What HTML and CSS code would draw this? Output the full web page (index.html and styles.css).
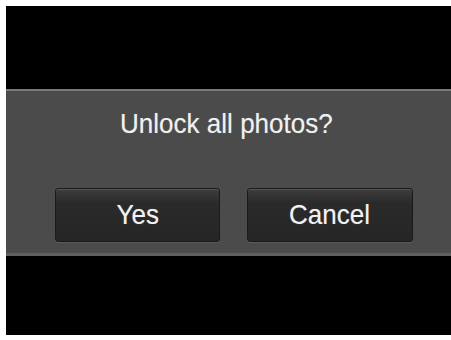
FILE: index.html
```html
<!DOCTYPE html>
<html>
<head>
<meta charset="utf-8">
<link rel="stylesheet" href="styles.css">
</head>
<body>
<div class="screen">
  <div class="dialog">
    <div class="title"><span class="label">Unlock all photos?</span></div>
    <div class="buttons">
      <div class="btn"><span class="label">Yes</span></div>
      <div class="btn"><span class="label">Cancel</span></div>
    </div>
  </div>
</div>
</body>
</html>
```

FILE: styles.css
```css
html, body {
  margin: 0;
  padding: 0;
  background: #ffffff;
}
body {
  padding: 6px 0 5px 6px;
  font-family: "Liberation Sans", Arial, sans-serif;
}
.screen {
  background: #000000;
  height: 329px;
  padding-top: 83px;
  box-sizing: border-box;
}
.dialog {
  height: 167px;
  box-sizing: border-box;
  background: #4b4b4b;
  border-top: 2px solid #7a7a7a;
  border-bottom: 3px solid #5f5f5f;
  padding-top: 18px;
}
.label {
  display: inline-block;
  transform: scaleX(0.93);
  text-shadow: 0 0 1px rgba(255, 255, 255, 0.35);
}
.title {
  color: #f0f0f0;
  font-size: 28px;
  line-height: 30px;
  text-align: center;
  padding-right: 4px;
}
.buttons {
  display: flex;
  gap: 27px;
  padding-left: 49px;
  margin-top: 49px;
}
.btn {
  width: 165px;
  height: 54px;
  box-sizing: border-box;
  border: 1px solid #1a1a1a;
  border-radius: 3px;
  background: linear-gradient(#3e3e3e 0px, #353535 6px, #2a2a2a 14px, #262626 100%);
  box-shadow: inset 0 1px 0 #555555, 0 1px 0 #5a5a5a;
  color: #f2f2f2;
  font-size: 28px;
  line-height: 52px;
  text-align: center;
}
.btn + .btn {
  width: 166px;
}
```
